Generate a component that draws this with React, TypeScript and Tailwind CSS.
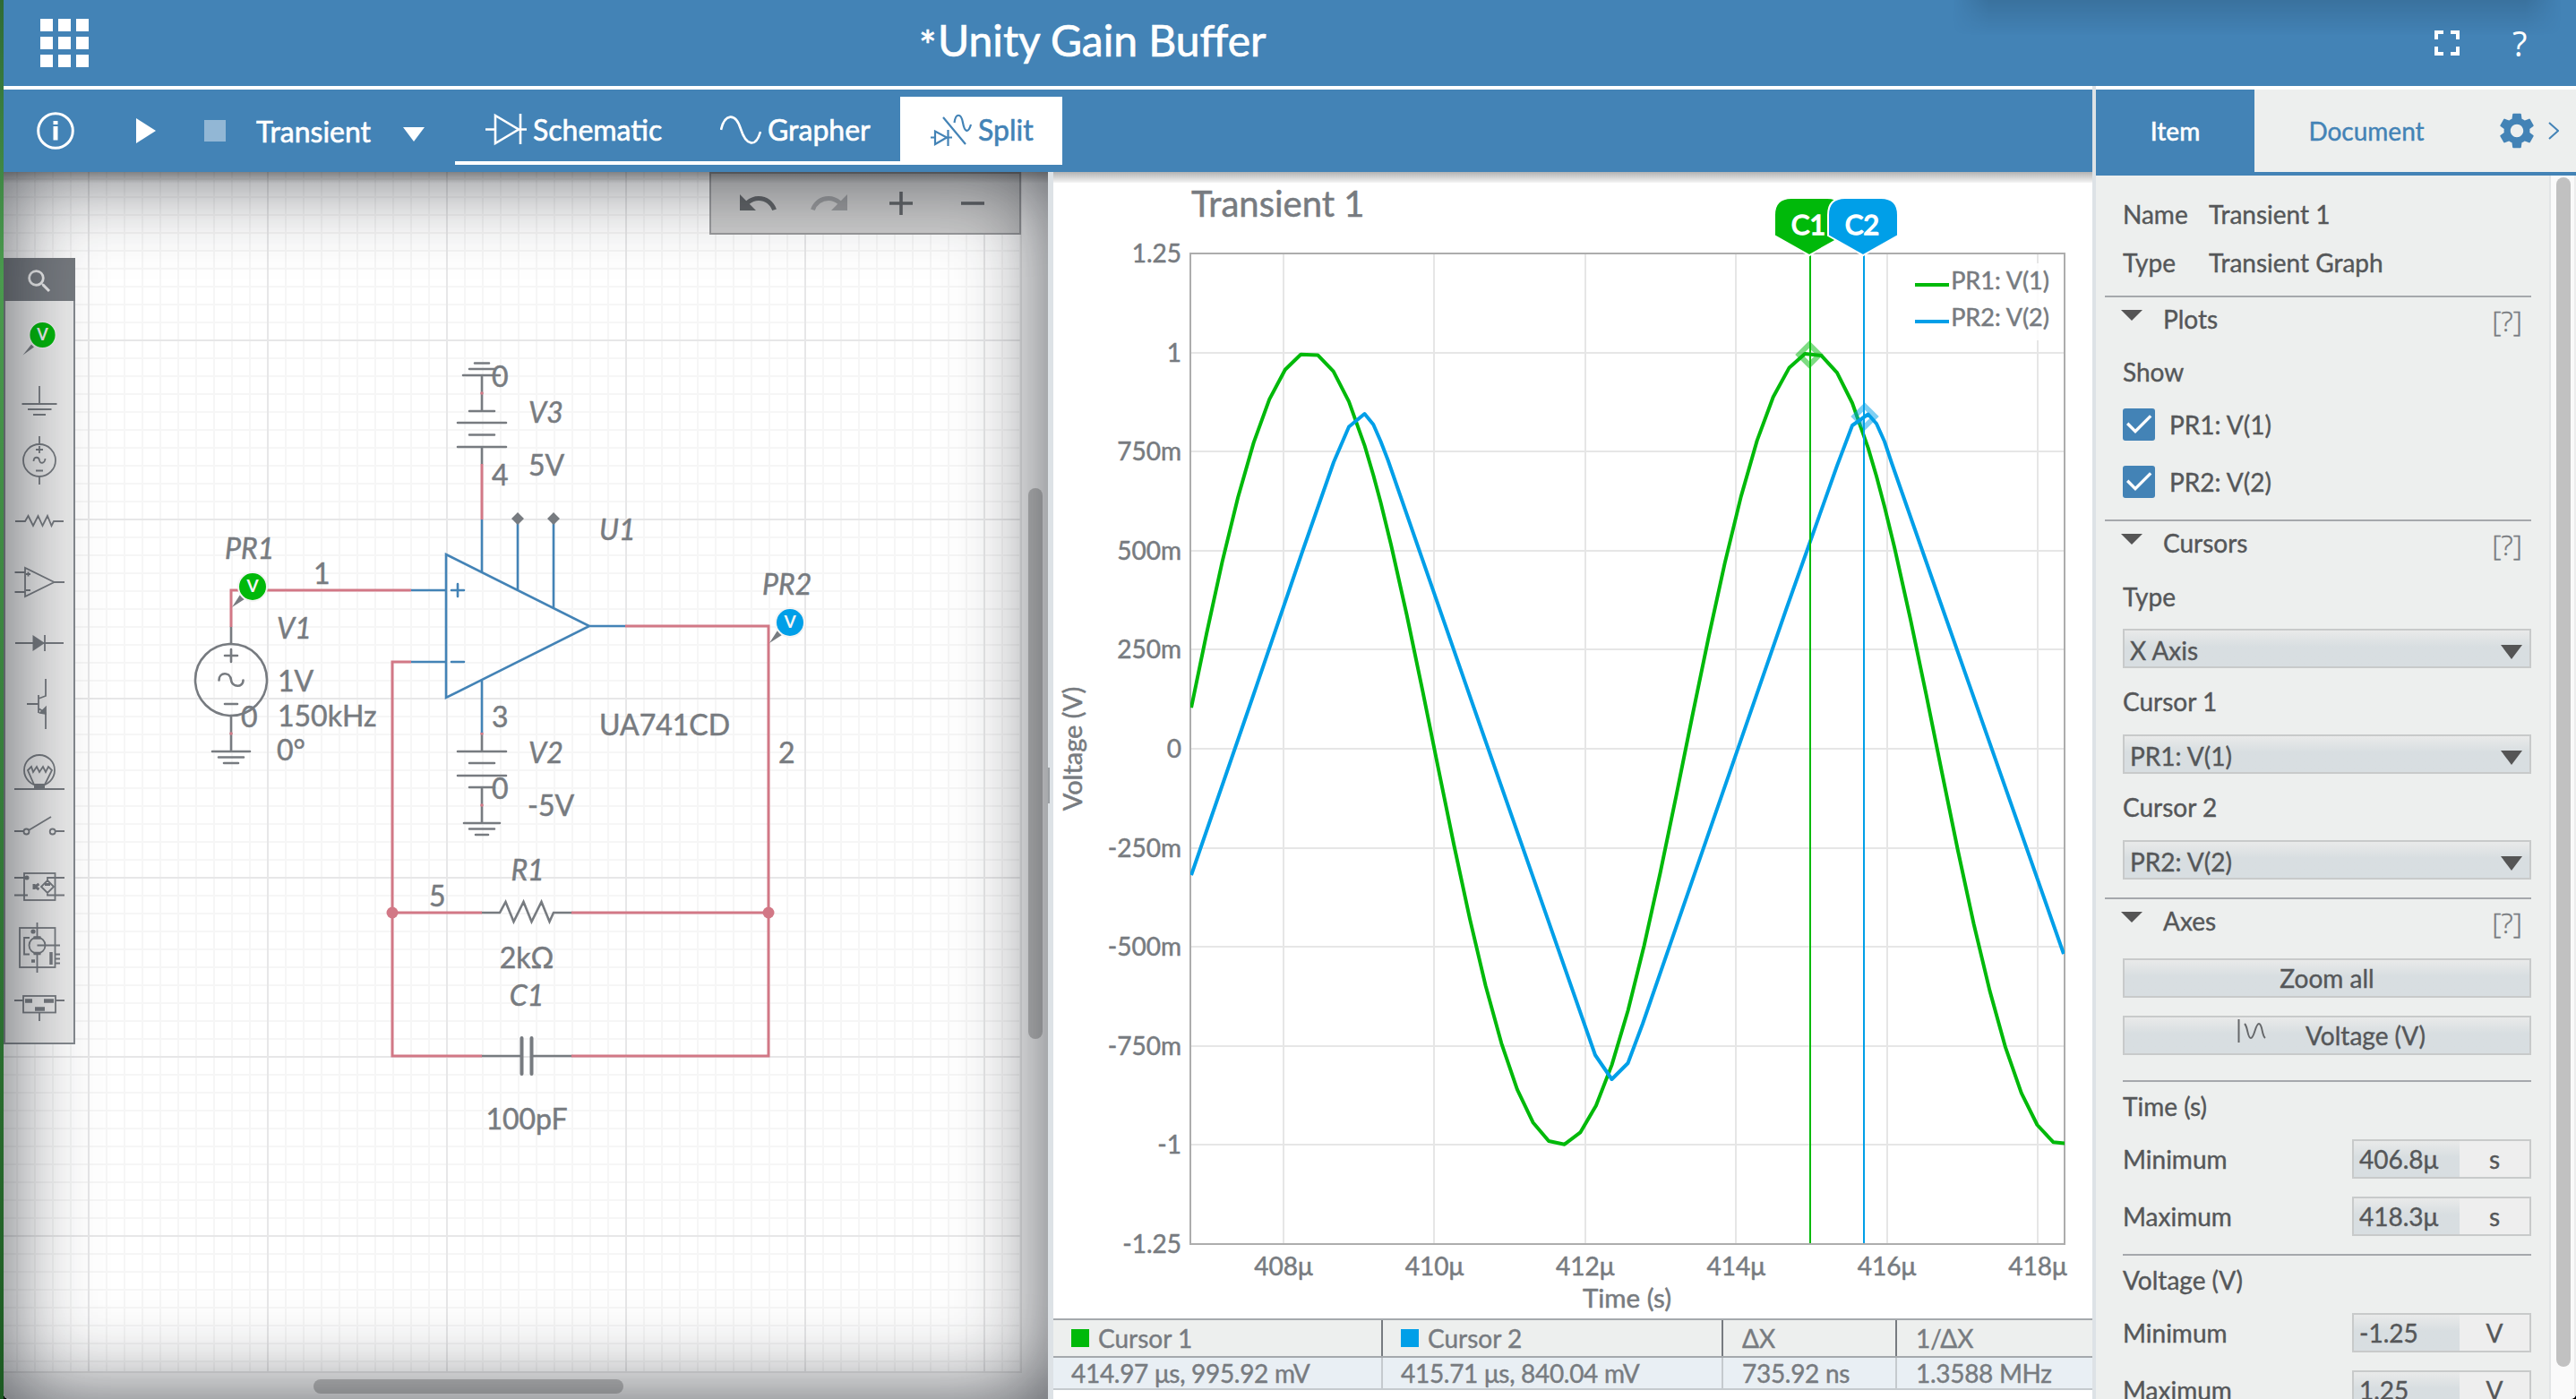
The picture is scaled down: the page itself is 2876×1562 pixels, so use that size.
import type { ReactNode } from "react";
import { MdFullscreen, MdRedo, MdSearch, MdSettings, MdUndo } from "react-icons/md";

const INK = "#777b80";
const WIRE = "#d27886";
const BLUE = "#4383b6";
const GREEN = "#00b90a";
const SKY = "#009fe8";

/* ---------- Header and toolbar ---------- */

function Header() {
  return (
    <header className="relative flex h-24 shrink-0 items-center bg-[#4383b6] text-white [-webkit-text-stroke:0.7px_white]">
      <div className="absolute top-0 right-4 h-10 w-[680px] bg-linear-to-b from-black/13 to-transparent mask-x-from-94% mask-x-to-100%" />
      <div className="ml-[41px] grid grid-cols-3 gap-1.5">
        {Array.from({ length: 9 }, (_, i) => (
          <span key={i} className="size-3.5 bg-white" />
        ))}
      </div>
      <span className="mt-1.5 ml-[927px] w-[21px] text-[46px] leading-12">*</span>
      <h1 className="-mt-1.5 text-[48px] leading-[56px] whitespace-nowrap">Unity Gain Buffer</h1>
      <div className="mr-[55px] ml-auto flex items-center">
        <MdFullscreen className="mr-[49px] size-12" />
        <span className="w-4 font-['Open_Sans'] text-[38px] leading-10 [-webkit-text-stroke:0]">?</span>
      </div>
    </header>
  );
}

function DiodeIcon() {
  return (
    <svg className="h-[38px] w-[46px]" viewBox="0 0 46 38" fill="none" stroke="currentColor" strokeWidth="2.6">
      <path d="M0 19.5H11M37 19.5H46M11 4V35L37 19.5ZM39 2V36" />
    </svg>
  );
}

function SineIcon() {
  return (
    <svg className="h-[38px] w-[46px]" viewBox="0 0 46 38" fill="none" stroke="currentColor" strokeWidth="2.6">
      <path d="M1 20C5 2 17 0 23 19S40 40 45 22" />
    </svg>
  );
}

function SplitIcon() {
  return (
    <svg className="h-[38px] w-[46px]" viewBox="0 0 46 38" fill="none" stroke="currentColor" strokeWidth="2.2">
      <path d="M0 28.500H5M18 28.500H24M5 21.500V36L18 28.500ZM19.500 20V38M14 6L39 36M26.500 12C28 1 34 1 36 12S42 24 45 14" />
    </svg>
  );
}

function Tab({ icon, label, width, active }: { icon: ReactNode; label: string; width: string; active?: boolean }) {
  return (
    <div
      className={`flex h-[76px] items-center gap-[7px] border-b-4 border-white pl-[34px] text-[32px] leading-10 ${width} ${
        active ? "bg-white text-[#4383b6]" : "text-white"
      }`}
    >
      {icon}
      <span className="pt-0.5">{label}</span>
    </div>
  );
}

function Toolbar() {
  return (
    <div className="flex h-[92px] shrink-0 items-center bg-[#4383b6] text-white [-webkit-text-stroke:0.6px]">
      <svg className="ml-[37px] size-[42px]" viewBox="0 0 42 42" fill="none" stroke="white" strokeWidth="3">
        <circle cx="21" cy="21" r="19.3" />
        <path d="M21 16V31.500" strokeWidth="5" />
        <path d="M21 10V14" strokeWidth="5" />
      </svg>
      <svg className="ml-[69px] h-7 w-[22px]" viewBox="0 0 22 28">
        <path d="M0 0L22 14L0 28Z" fill="white" />
      </svg>
      <span className="ml-[54px] size-6 bg-white/42" />
      <span className="ml-[34px] w-[164px] pt-0.5 text-[32px] leading-10">Transient</span>
      <svg className="mt-2 h-4 w-6" viewBox="0 0 24 16">
        <path d="M0 0H24L12 16Z" fill="white" />
      </svg>
      <nav className="ml-[34px] flex">
        <Tab icon={<DiodeIcon />} label="Schematic" width="w-[262px]" />
        <Tab icon={<SineIcon />} label="Grapher" width="w-[235px]" />
        <Tab icon={<SplitIcon />} label="Split" width="w-[181px]" active />
      </nav>
    </div>
  );
}

/* ---------- Schematic ---------- */

function Probe({ x, y, color, r = 15 }: { x: number; y: number; color: string; r?: number }) {
  return (
    <g>
      <path d={`M${x - 23} ${y + 23}L${x - 14} ${y + 9}L${x - 9} ${y + 14}Z`} fill={INK} />
      <circle cx={x} cy={y} r={r + 1} fill={color} stroke="#f4f4f4" strokeWidth="2" />
      <text x={x} y={y + 6} textAnchor="middle" fontSize="19" fontWeight="700" fill="#f6f6f6">
        V
      </text>
    </g>
  );
}

const labels: { x: number; y: number; t: string; i?: boolean; m?: boolean }[] = [
  { x: 251, y: 624, t: "PR1", i: true },
  { x: 350, y: 652, t: "1" },
  { x: 309, y: 713, t: "V1", i: true },
  { x: 310, y: 772, t: "1V" },
  { x: 310, y: 811, t: "150kHz" },
  { x: 309, y: 849, t: "0°" },
  { x: 269, y: 812, t: "0" },
  { x: 549, y: 432, t: "0" },
  { x: 590, y: 472, t: "V3", i: true },
  { x: 590, y: 531, t: "5V" },
  { x: 549, y: 542, t: "4" },
  { x: 669, y: 603, t: "U1", i: true },
  { x: 851, y: 664, t: "PR2", i: true },
  { x: 669, y: 821, t: "UA741CD" },
  { x: 549, y: 812, t: "3" },
  { x: 590, y: 852, t: "V2", i: true },
  { x: 869, y: 852, t: "2" },
  { x: 549, y: 892, t: "0" },
  { x: 589, y: 911, t: "-5V" },
  { x: 589, y: 983, t: "R1", i: true, m: true },
  { x: 479, y: 1012, t: "5" },
  { x: 588, y: 1081, t: "2kΩ", m: true },
  { x: 588, y: 1123, t: "C1", i: true, m: true },
  { x: 588, y: 1261, t: "100pF", m: true },
];

function Circuit() {
  return (
    <svg className="block h-full w-full" viewBox="4 192 1166 1370" fill="none">
      <defs>
        <pattern id="minor" width="20" height="20" x="98" y="179" patternUnits="userSpaceOnUse">
          <path d="M0 1H20M1 0V20" stroke="#f6f6f6" strokeWidth="2" />
        </pattern>
        <pattern id="major" width="200" height="200" x="98" y="179" patternUnits="userSpaceOnUse">
          <path d="M0 1H200M1 0V200" stroke="#e7e7e8" strokeWidth="2" />
        </pattern>
      </defs>
      <rect x="4" y="192" width="1166" height="1370" fill="white" />
      <rect x="4" y="192" width="1136" height="1340" fill="url(#minor)" />
      <rect x="4" y="192" width="1136" height="1340" fill="url(#major)" />
      <rect x="1140" y="192" width="30" height="1370" fill="#f8f8f8" />
      <rect x="4" y="1532" width="1136" height="30" fill="#f8f8f8" />
      <path d="M1140 192V1532H4" stroke="#e6e6e6" strokeWidth="2" />
      <rect x="1148" y="545" width="16" height="615" rx="8" fill="#c1c1c1" />
      <rect x="350" y="1540" width="346" height="16" rx="8" fill="#c1c1c1" />

      <g stroke={INK} strokeWidth="2.6" strokeLinecap="round">
        <path d="M258 700V719M258 799V839M237 839H279M244 845.500H272M250 852H266" />
        <circle cx="258" cy="759" r="40" />
        <path d="M251 732H265M258 725V739M251 786H265" />
        <path d="M244.500 759.500C244.500 750 257 750 258 759S271.500 768 271.500 759.500" />
        <path d="M530 405.500H546M524 412H552M517 419H558M538 419V459M524 459H552M511 472H565M524 485.500H552M511 499H565M538 499V518" />
        <path d="M538 819V839M511 839H565M524 852H552M511 866H565M524 879H552M538 879V919M518 919H558M524 925.500H552M531 932H545" />
        <path d="M538 1019H558L564.500 1007L573.500 1029L584.500 1007L593.500 1029L604.500 1007L613.500 1029L618 1019H638" />
        <path d="M538 1179H582M594 1179H638" />
        <path d="M582.500 1159V1199M593.500 1159V1199" strokeWidth="4" />
      </g>
      <g stroke={WIRE} strokeWidth="3">
        <path d="M258 700V659H459M538 518V580M698 699H858V1179H638M459 739H438V1179H538M438 1019H538M638 1019H858" />
      </g>
      <g fill={WIRE}>
        <circle cx="438" cy="1019" r="6.500" />
        <circle cx="858" cy="1019" r="6.500" />
        <circle cx="258" cy="819" r="1.800" />
        <circle cx="538" cy="439" r="1.800" />
        <circle cx="538" cy="819" r="1.800" />
        <circle cx="538" cy="899" r="1.800" />
      </g>
      <g stroke={BLUE} strokeWidth="2.600">
        <path d="M498 619L658 699L498 779ZM459 659H498M459 739H498M658 699H698M538 580V639M578 580V659M618 580V679M538 759V818" />
        <path d="M504 659H518M511 652V666M504 739H518" strokeLinecap="round" />
      </g>
      <path d="M578 572L585 579L578 586L571 579ZM618 572L625 579L618 586L611 579Z" fill={INK} />
      <Probe x={282} y={655} color={GREEN} />
      <Probe x={882} y={695} color={SKY} />
      <g fill={INK} fontSize="32" stroke={INK} strokeWidth="0.500">
        {labels.map((l, k) => (
          <text key={k} x={l.x} y={l.y} fontStyle={l.i ? "italic" : "normal"} textAnchor={l.m ? "middle" : "start"}>
            {l.t}
          </text>
        ))}
      </g>
    </svg>
  );
}

function Palette() {
  return (
    <div className="absolute top-24 left-0 h-[878px] w-20 border-2 border-[#858a8f] bg-[#ececec]">
      <div className="-m-0.5 mb-0 flex h-12 items-center justify-center bg-[#777b80]">
        <MdSearch className="mt-1 size-[34px] text-[#f0f0f0]" />
      </div>
      <svg className="-ml-0.5 block h-[828px] w-20" viewBox="4 336 80 828" fill="none" stroke={INK} strokeWidth="1.800">
        <path d="M25.500 396.500L35 384.500L38 387.500Z" fill={INK} stroke="none" />
        <circle cx="47.500" cy="374" r="15" fill={GREEN} stroke="#f2f2f2" />
        <text x="47.500" y="380" textAnchor="middle" fontSize="18" fontWeight="700" fill="#f2f2f2" stroke="none">
          V
        </text>
        <path d="M44 431V450M24.500 451H63.500M31 457H57.500M37 463H51" />
        <circle cx="44" cy="514" r="18" />
        <path d="M44 487V496M44 532V541M40 502H48M44 498V506M40 525.500H48" />
        <path d="M37.500 515C38 509 43.500 510 44 514S50 518 50.500 512" />
        <path d="M17 582H28L31.500 576L37 587L42.500 576L47.500 587L53 576L57.500 587L60 582H71" />
        <path d="M28 634V666L60.500 650ZM16.500 639H28M16.500 661H28M60.500 650H72M29 641H34M31.500 638.500V643.500M29 659H34" />
        <path d="M17 718H71M50 709V727" />
        <path d="M36.500 709V727L50 718Z" fill={INK} stroke="none" />
        <path d="M51 758V777L43 780M43 776V796M30 786H43M43 791L51 796V814" />
        <path d="M45 796L51 790V797Z" fill={INK} />
        <circle cx="44" cy="860" r="17" />
        <path d="M16 881H72M38 876L31 860L35 856L37 862L41 856L44 862L48 856L51 862L54 856L58 860L50 876" />
        <rect x="38" y="875" width="12" height="6" fill={INK} stroke="none" />
        <path d="M16 928H26M32 927L57 912M62 928H72" />
        <circle cx="29.500" cy="928.500" r="3" />
        <circle cx="58.700" cy="928.500" r="3" />
        <rect x="27" y="975" width="34.500" height="30" />
        <path d="M16 980H31M16 999.500H31M72 980H53V984M72 999.500H53V996M53 983L60 990L53 997L46 990Z" />
        <circle cx="30" cy="980" r="2.500" fill={INK} stroke="none" />
        <path d="M38 987V993M43.500 987L39 990L43.500 993M50 987.500H56" strokeWidth="3" />
        <rect x="22" y="1036" width="39.500" height="44" />
        <circle cx="41.500" cy="1055.500" r="9" />
        <path d="M41.500 1030V1046M41.500 1065V1086M33 1047H27V1065.500H33M41.500 1055.500H67M61 1065.500H67M61 1070.500H67M61 1075.500H67" />
        <path d="M37.500 1047H45.500M37.500 1064.500H45.500M35 1073H39M57 1063V1077" strokeWidth="3.500" />
        <circle cx="37" cy="1040" r="2.600" fill={INK} stroke="none" />
        <rect x="26" y="1112" width="36" height="18.500" />
        <path d="M16 1117H26M62 1117H72M44 1130V1140" />
        <path d="M28 1117.500H36M49 1117.500H60M39 1126.500H50" strokeWidth="4.500" />
      </svg>
    </div>
  );
}

function EditBar() {
  return (
    <div className="absolute top-0 right-[30px] flex h-[70px] w-[348px] items-center border-2 border-[#9b9c9e] bg-[#cdcdcd] pb-1 pl-7 text-[#626568]">
      <MdUndo className="mt-1 size-12" />
      <MdRedo className="mt-1 ml-8 size-12 text-[#9c9d9f]" />
      <svg className="mt-1 ml-[43px] size-[26px]" viewBox="0 0 26 26" stroke="currentColor" strokeWidth="3.600">
        <path d="M0 13H26M13 0V26" />
      </svg>
      <svg className="mt-1 ml-[54px] size-[26px]" viewBox="0 0 26 26" stroke="currentColor" strokeWidth="3.600">
        <path d="M0 13H26" />
      </svg>
    </div>
  );
}

function SchematicPane() {
  return (
    <section className="relative w-[1166px] shrink-0 overflow-hidden">
      <Circuit />
      <Palette />
      <EditBar />
      <div className="pointer-events-none absolute inset-0 shadow-[inset_0_0_100px_rgba(20,24,32,0.72)]" />
      <div className="pointer-events-none absolute inset-x-0 top-0 h-3 bg-linear-to-b from-black/25 to-black/2" />
    </section>
  );
}

/* ---------- Grapher ---------- */

const xOf = (t: number) => 1433 + (t - 408) * 84.2;
const yOf = (v: number) => 836 - v * 442.4;

const steps = (from: number, to: number, n: number) =>
  Array.from({ length: n }, (_, k) => from + ((to - from) * k) / n);

const samples = [
  1330,
  ...steps(1347, 1452.3, 6),
  1452.3,
  1471.2,
  1488.7,
  1506,
  1523.5,
  1533.3,
  1541.5,
  ...steps(1553, 1799.5, 14),
  1799.5,
  ...steps(1817.6, 1997.7, 10),
  1997.7,
  2015.1,
  2033.6,
  2051,
  2068,
  2085.7,
  2095,
  2104,
  ...steps(2115, 2310, 11),
  2310,
];

const sinePoints = samples
  .map((x) => {
    const t = 408 + (x - 1433) / 84.2;
    return `${x.toFixed(1)},${yOf(Math.sin(2 * Math.PI * 0.15 * t)).toFixed(1)}`;
  })
  .join(" ");

const bluePoints =
  "1330,977 1398,780 1454,616 1489,516 1506,476.500 1523.500,462 1533.300,474 1541.500,492.700 1549.700,514 1642,780 1781,1178 1799.500,1205 1817.500,1187 1834,1143 1994.300,680 2051,520 2068,475 2085.700,462.500 2095,473 2104,493 2112,517 2169,680 2304,1065";

function Flag({ x, color, label }: { x: number; color: string; label: string }) {
  return (
    <g>
      <path
        d={`M${x - 39} 263V240Q${x - 39} 221 ${x - 20} 221H${x + 20}Q${x + 39} 221 ${x + 39} 240V263L${x} 285Z`}
        fill={color}
        stroke="white"
        strokeWidth="2"
      />
      <text x={x - 1} y="261.500" textAnchor="middle" fontSize="31" fill="white" stroke="white" strokeWidth="1.400">
        {label}
      </text>
    </g>
  );
}

function Chart() {
  const yTicks = ["1.25", "1", "750m", "500m", "250m", "0", "-250m", "-500m", "-750m", "-1", "-1.25"];
  const xTicks = [408, 410, 412, 414, 416, 418];
  return (
    <svg className="block h-[1280px] w-[1160px]" viewBox="1176 192 1160 1280" fill="none" fontSize="28">
      <defs>
        <clipPath id="plot">
          <rect x="1329" y="283" width="976" height="1106" />
        </clipPath>
      </defs>
      <text x="1330" y="241.500" fontSize="40" fill={INK} stroke={INK} strokeWidth="0.500">
        Transient 1
      </text>
      <g stroke="#e6e6e6" strokeWidth="2">
        {xTicks.map((t) => (
          <path key={t} d={`M${Math.round(xOf(t))} 283V1389`} />
        ))}
        {yTicks.map((_, i) => (
          <path key={i} d={`M1329 ${Math.round(283 + i * 110.6)}H2305`} />
        ))}
      </g>
      <rect x="1329" y="283" width="976" height="1106" stroke="#adadad" strokeWidth="2" />
      <g fill={INK} stroke={INK} strokeWidth="0.500">
        {yTicks.map((t, i) => (
          <text key={t} x="1319" y={293 + i * 110.6} textAnchor="end">
            {t}
          </text>
        ))}
        {xTicks.map((t) => (
          <text key={t} x={xOf(t)} y="1423.500" textAnchor="middle">
            {t}μ
          </text>
        ))}
        <text x="1816.500" y="1460" textAnchor="middle" fontSize="29.500">
          Time (s)
        </text>
        <text transform="translate(1208 836) rotate(-90)" textAnchor="middle" fontSize="29">
          Voltage (V)
        </text>
      </g>
      <g clipPath="url(#plot)" strokeWidth="4" strokeLinejoin="round">
        <polyline points={sinePoints} stroke={GREEN} />
        <polyline points={bluePoints} stroke={SKY} />
      </g>
      <path d="M2020 384.500L2031.500 396L2020 407.500L2008.500 396Z" stroke={GREEN} strokeOpacity="0.500" strokeWidth="6" />
      <path d="M2082 453.500L2093.500 465L2082 476.500L2070.500 465Z" stroke={SKY} strokeOpacity="0.500" strokeWidth="6" />
      <rect x="2132" y="294" width="160" height="86" fill="white" fillOpacity="0.850" />
      <path d="M2138 318H2176" stroke={GREEN} strokeWidth="4" />
      <path d="M2138 359H2176" stroke={SKY} strokeWidth="4" />
      <g fill={INK} stroke={INK} strokeWidth="0.500" fontSize="27">
        <text x="2288" y="322.500" textAnchor="end">
          PR1: V(1)
        </text>
        <text x="2288" y="363.500" textAnchor="end">
          PR2: V(2)
        </text>
      </g>
      <path d="M2021 285V1388" stroke={GREEN} strokeWidth="2" />
      <path d="M2081 285V1388" stroke={SKY} strokeWidth="2" />
      <Flag x={2020} color={GREEN} label="C1" />
      <Flag x={2080} color={SKY} label="C2" />
    </svg>
  );
}

const cursorColumns = [
  { head: "Cursor 1", value: "414.97 μs, 995.92 mV", swatch: "bg-[#00b90a]" },
  { head: "Cursor 2", value: "415.71 μs, 840.04 mV", swatch: "bg-[#009fe8]" },
  { head: "ΔX", value: "735.92 ns" },
  { head: "1/ΔX", value: "1.3588 MHz" },
];

function CursorTable() {
  return (
    <div className="border-y-2 border-t-[#a5a9ad] border-b-[#c5cace] text-[28px] leading-[34px] whitespace-nowrap text-[#777b80] [-webkit-text-stroke:0.4px]">
      <div className="grid h-[42px] grid-cols-[368px_380px_194px_218px] border-b-2 border-[#a5a9ad] bg-[#edefee]">
        {cursorColumns.map((c, i) => (
          <div
            key={c.head}
            className={`flex items-center ${i < 3 ? "border-r-2 border-[#777b80]" : ""} ${i < 2 ? "pl-5" : "pl-[21px]"}`}
          >
            {c.swatch && <span className={`mr-2.5 size-5 ${c.swatch}`} />}
            {c.head}
          </div>
        ))}
      </div>
      <div className="grid h-[34px] grid-cols-[368px_380px_194px_218px] bg-[#e9eff4] tracking-[-0.3px]">
        {cursorColumns.map((c, i) => (
          <div
            key={c.head}
            className={`${i < 3 ? "border-r-2 border-[#c5cace]" : ""} ${i < 2 ? "pl-5" : "pl-[21px]"}`}
          >
            {c.value}
          </div>
        ))}
      </div>
    </div>
  );
}

function GrapherPane() {
  return (
    <section className="relative w-[1160px] shrink-0 bg-white">
      <Chart />
      <CursorTable />
      <div className="absolute inset-x-0 top-0 h-3 bg-linear-to-b from-black/30 to-black/4" />
    </section>
  );
}

/* ---------- Properties panel ---------- */

function Section({ title, children }: { title: string; children: ReactNode }) {
  return (
    <section>
      <div className="-ml-5 h-0.5 bg-[#a5a8ac]" />
      <div className="flex h-12 items-center">
        <svg className="mb-2 -ml-0.5 h-3 w-6" viewBox="0 0 24 12">
          <path d="M0 0H24L12 12Z" fill="#555" />
        </svg>
        <span className="ml-[23px]">{title}</span>
        <span className="mt-1 mr-2.5 ml-auto font-['Open_Sans'] text-[32px] font-light text-[#777b80]">[?]</span>
      </div>
      {children}
    </section>
  );
}

function Check({ label }: { label: string }) {
  return (
    <div className="flex h-16 items-center gap-4">
      <svg className="size-9" viewBox="3 3 18 18">
        <rect x="3" y="3" width="18" height="18" rx="1.500" fill={BLUE} />
        <path d="M10 17l-5-5 1.200-1.200L10 14.600l8-8L19.200 7.800z" fill="white" />
      </svg>
      {label}
    </div>
  );
}

const field = "h-11 border-2 border-[#c8caca]";
const fieldFill = "bg-linear-to-b from-[#e9eaea] to-[#d8dee1] to-45%";

function Select({ label, value, labelHeight }: { label: string; value: string; labelHeight: string }) {
  return (
    <div>
      <div className={`flex items-center ${labelHeight}`}>{label}</div>
      <div className={`flex items-center justify-between pt-[3px] pr-2 pl-1.5 ${field} ${fieldFill}`}>
        {value}
        <svg className="mt-1 h-4 w-6" viewBox="0 0 24 16">
          <path d="M0 0H24L12 16Z" fill="#555" />
        </svg>
      </div>
    </div>
  );
}

function Range({ label, value, unit, className }: { label: string; value: string; unit: string; className: string }) {
  return (
    <div className={`flex items-center justify-between ${className}`}>
      <span>{label}</span>
      <div className={`flex w-[200px] ${field}`}>
        <div className={`flex w-[118px] items-center pl-1.5 ${fieldFill}`}>{value}</div>
        <div className="flex flex-1 items-center justify-center bg-[#eeeeee]">{unit}</div>
      </div>
    </div>
  );
}

function PropertiesPanel() {
  return (
    <aside className="flex w-[536px] shrink-0 flex-col bg-[#edefee] text-[28px] leading-9 text-[#555759] [-webkit-text-stroke:0.4px]">
      <div className="flex h-24 shrink-0 border-b-4 border-[#4383b6] text-[#4383b6]">
        <div className="flex w-[177px] items-center justify-center bg-[#4383b6] font-medium text-white">Item</div>
        <div className="flex w-[250px] items-center justify-center">Document</div>
        <MdSettings className="my-auto ml-[19px] size-12" />
        <svg className="my-auto ml-[11px] h-5 w-3" viewBox="0 0 12 20" fill="none" stroke="currentColor" strokeWidth="2">
          <path d="M1 1L11 10L1 19" />
        </svg>
      </div>
      <div className="flex min-h-0 flex-1">
        <div className="flex w-[508px] shrink-0 flex-col overflow-hidden border-r-2 border-[#e2e5e6] pt-4 pr-5 pl-[30px]">
          <div className="mb-2.5 grid shrink-0 grid-cols-[96px_1fr] items-center *:h-[54px] *:leading-[54px]">
            <span>Name</span>
            <span>Transient 1</span>
            <span>Type</span>
            <span>Transient Graph</span>
          </div>
          <Section title="Plots">
            <div className="flex h-[62px] items-center pt-[7px]">Show</div>
            <Check label="PR1: V(1)" />
            <Check label="PR2: V(2)" />
            <div className="h-2.5" />
          </Section>
          <Section title="Cursors">
            <Select label="Type" value="X Axis" labelHeight="h-[72px]" />
            <Select label="Cursor 1" value="PR1: V(1)" labelHeight="h-[74px]" />
            <Select label="Cursor 2" value="PR2: V(2)" labelHeight="h-[74px]" />
            <div className="h-5" />
          </Section>
          <Section title="Axes">
            <div className={`mt-[18px] flex items-center justify-center ${field} ${fieldFill}`}>Zoom all</div>
            <div className={`mt-5 flex items-center pl-[126px] ${field} ${fieldFill}`}>
              <svg className="mb-2.5 h-7 w-8" viewBox="0 0 32 28" fill="none" stroke="#66686b" strokeWidth="2">
                <path d="M1.500 1V27M8 6C12 10 11 22 15 22S20 6 24 6S27 19 31 22" />
              </svg>
              <span className="ml-11">Voltage (V)</span>
            </div>
            <div className="mt-7 h-0.5 bg-[#a5a8ac]" />
            <div className="flex h-[54px] items-center">Time (s)</div>
            <Range label="Minimum" value="406.8μ" unit="s" className="mt-2.5" />
            <Range label="Maximum" value="418.3μ" unit="s" className="mt-5" />
            <div className="mt-5 h-0.5 bg-[#a5a8ac]" />
            <div className="flex h-[54px] items-center">Voltage (V)</div>
            <Range label="Minimum" value="-1.25" unit="V" className="mt-2.5" />
            <Range label="Maximum" value="1.25" unit="V" className="mt-5" />
          </Section>
        </div>
        <div className="flex-1 border-r-2 border-[#ededed] bg-[#fafafa] pt-0.5 pl-1.5">
          <div className="h-[1328px] w-4 rounded-full bg-[#c1c1c1]" />
        </div>
      </div>
    </aside>
  );
}

export default function App() {
  return (
    <div className="flex h-[1562px] w-[2876px] overflow-hidden bg-black font-['Lato',sans-serif]">
      <div className="w-1 shrink-0 bg-linear-to-b from-[#2f6b35] via-[#4a9a4e] via-20% to-[#1c5a22]" />
      <div className="flex w-[2872px] flex-col overflow-hidden rounded-b-[6px]">
        <Header />
        <div className="flex h-[1466px] shrink-0 border-t-4 border-white">
          <div className="flex w-[2332px] shrink-0 flex-col">
            <Toolbar />
            <div className="flex h-[1370px]">
              <SchematicPane />
              <div className="flex w-1.5 shrink-0 items-center bg-[#dde2e6]">
                <span className="h-10 w-0.5 bg-[#9a9ea2]" />
              </div>
              <GrapherPane />
            </div>
          </div>
          <div className="-mt-1 w-1 shrink-0 bg-[#dde2e6]" />
          <PropertiesPanel />
        </div>
      </div>
    </div>
  );
}
